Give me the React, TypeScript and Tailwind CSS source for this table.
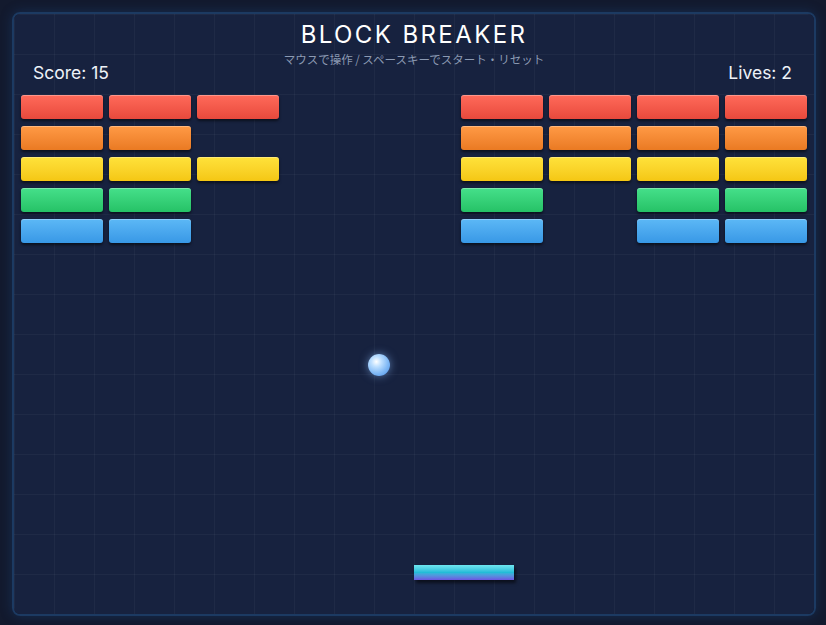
import React from "react";

type Row = { colors: string; cols: number[] };

const rows: Row[] = [
  { colors: "from-[#ff6a5a] to-[#e8493c]", cols: [0, 1, 2, 5, 6, 7, 8] },
  { colors: "from-[#ff9a45] to-[#ea7a22]", cols: [0, 1, 5, 6, 7, 8] },
  { colors: "from-[#ffe23a] to-[#f5c712]", cols: [0, 1, 2, 5, 6, 7, 8] },
  { colors: "from-[#45e08a] to-[#25c266]", cols: [0, 1, 5, 7, 8] },
  { colors: "from-[#5cb8f6] to-[#3898e6]", cols: [0, 1, 5, 7, 8] },
];

const Brick: React.FC<{ colors: string; on: boolean }> = ({ colors, on }) => {
  if (!on) return <div className="h-[24px]" />;
  return (
    <div
      className={`h-[24px] rounded-[3px] bg-linear-to-b ${colors} shadow-[inset_0_1px_0_rgba(255,255,255,0.3),0_2px_3px_rgba(0,0,0,0.55)]`}
    />
  );
};

const App: React.FC = () => {
  return (
    <div className="min-h-screen bg-[#131a2e] pl-[12px] pt-3 font-['Inter','Noto_Sans_CJK_JP',sans-serif]">
      <div className="w-[804px] h-[604px] rounded-[8px] border-2 border-[#1c3a62] shadow-[0_0_12px_rgba(30,80,150,0.35)] overflow-hidden">
        <div className="relative w-[800px] h-[600px] bg-[#17223f] bg-[linear-gradient(rgba(255,255,255,0.035)_1px,transparent_1px),linear-gradient(90deg,rgba(255,255,255,0.035)_1px,transparent_1px)] bg-[size:40px_40px]">
          <header className="flex flex-col items-center pt-[6px]">
            <h1 className="text-[24px] leading-[30px] tracking-[0.1em] text-white font-normal">
              BLOCK BREAKER
            </h1>
            <p className="mt-[2px] text-[11.5px] leading-[14px] text-[#8c9ab3] font-['Noto_Sans_CJK_JP',sans-serif]">
              マウスで操作 / スペースキーでスタート・リセット
            </p>
          </header>
          <div className="flex justify-between pl-[19px] pr-[22px] text-[17.5px] leading-[22px] text-[#eef2f8] -mt-[4px]">
            <span>Score: 15</span>
            <span>Lives: 2</span>
          </div>
          <div className="grid grid-cols-9 gap-x-[6px] gap-y-[7px] px-[7px] mt-[11px]">
            {rows.map((row, r) =>
              Array.from({ length: 9 }, (_, c) => (
                <Brick key={`${r}-${c}`} colors={row.colors} on={row.cols.includes(c)} />
              ))
            )}
          </div>

          {/* ball */}
          <div className="absolute left-[354px] top-[340px] w-[22px] h-[22px] rounded-full bg-[radial-gradient(circle_at_38%_35%,#ffffff_0%,#bfe0ff_25%,#7fb8f5_60%,#4a8fe6_100%)] shadow-[0_0_8px_rgba(140,190,255,0.55)]" />

          {/* paddle */}
          <div className="absolute left-[400px] top-[551px] w-[100px] h-[15px] bg-linear-to-b from-[#6ee6f0] via-[#22bcd8] to-[#6a54e0] shadow-[2px_3px_3px_rgba(0,0,0,0.55)]" />
        </div>
      </div>
    </div>
  );
};

export default App;
